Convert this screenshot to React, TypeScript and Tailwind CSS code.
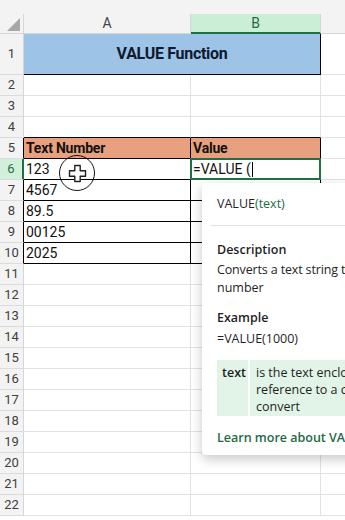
import React from "react";

const cellFont = { fontFamily: "Roboto, 'Liberation Sans', sans-serif" };
const tipFont = { fontFamily: "'Open Sans', 'Noto Sans', sans-serif" };

const tableA: Record<number, string> = { 6: "123", 7: "4567", 8: "89.5", 9: "00125", 10: "2025" };

function RowHeader({ n }: { n: number }) {
  const active = n === 6;
  const dark = n >= 5 && n <= 10 && !active;
  return (
    <div
      className={`w-[24px] shrink-0 flex items-center justify-center text-[13px] border-b border-b-[#dcdcdc] ${
        active
          ? "bg-[#d2efdb] text-[#1e7145] border-r-2 border-r-[#1e7145]"
          : dark
          ? "bg-[#f3f3f3] text-[#404040] border-r border-r-black"
          : "bg-[#f3f3f3] text-[#404040] border-r border-r-[#d6d6d6]"
      }`}
    >
      {n}
    </div>
  );
}

function Row({ n }: { n: number }) {
  if (n === 1) {
    return (
      <div className="flex h-[41px]">
        <RowHeader n={1} />
        <div className="w-[297px] shrink-0 bg-[#9dc3e6] border-r border-b border-black flex items-center justify-center">
          <span className="text-[16px] font-bold text-[#0e1a2e] tracking-[-0.3px]">VALUE Function</span>
        </div>
        <div className="flex-1 border-b border-[#e2e2e2]" />
      </div>
    );
  }
  if (n === 5) {
    return (
      <div className="flex h-[21px]">
        <RowHeader n={5} />
        <div className="w-[167px] shrink-0 bg-[#e9a07e] border-r border-b border-black flex items-center px-[2px]">
          <span className="text-[14px] font-bold text-[#111] tracking-[-0.2px]">Text Number</span>
        </div>
        <div className="w-[130px] shrink-0 bg-[#e9a07e] border-r border-b border-black flex items-center px-[2px]">
          <span className="text-[14px] font-bold text-[#111] tracking-[-0.2px]">Value</span>
        </div>
        <div className="flex-1 border-b border-[#e2e2e2]" />
      </div>
    );
  }
  const inTable = n >= 6 && n <= 10;
  const aboveTable = n === 4;
  return (
    <div className="flex h-[21px]">
      <RowHeader n={n} />
      <div
        className={`w-[167px] shrink-0 flex items-center px-[2px] border-r border-b ${
          inTable ? "border-black" : aboveTable ? "border-r-[#e2e2e2] border-b-black" : "border-[#e2e2e2]"
        }`}
      >
        {inTable && <span className="text-[14px] text-[#111]">{tableA[n]}</span>}
      </div>
      <div
        className={`relative w-[130px] shrink-0 flex items-center px-[2px] border-r border-b ${
          inTable ? "border-black" : aboveTable ? "border-r-[#e2e2e2] border-b-black" : "border-[#e2e2e2]"
        }`}
      >
        {n === 6 && (
          <>
            <span className="text-[14px] text-[#111]">=VALUE (</span>
            <span className="ml-[1px] w-[1px] h-[15px] bg-black" />
            <div className="absolute -left-[1px] -top-[1px] -right-[1px] -bottom-[1px] border-2 border-[#1e7145]" />
          </>
        )}
      </div>
      <div className="flex-1 border-b border-[#e2e2e2]" />
    </div>
  );
}

export default function App() {
  const rows = Array.from({ length: 22 }, (_, i) => i + 1);
  return (
    <div className="relative w-[345px] h-[520px] overflow-hidden bg-white" style={cellFont}>
      <div className="h-[14px] bg-[#f3f3f3]" />
      <div className="flex h-[20px] bg-[#f3f3f3] text-[14px]">
        <div className="w-[24px] shrink-0 relative border-r border-b border-[#d6d6d6]">
          <svg className="absolute left-[7px] top-[4px]" width="13" height="13" viewBox="0 0 13 13">
            <path d="M13 0 L13 13 L0 13 Z" fill="#a8a8a8" />
          </svg>
        </div>
        <div className="w-[167px] shrink-0 flex items-center justify-center text-[#444] border-r border-b border-[#d6d6d6]">A</div>
        <div className="w-[130px] shrink-0 flex items-center justify-center bg-[#caefd6] text-[#1e6b45] border-r border-r-[#d6d6d6] border-b-2 border-b-[#1e7145]">
          B
        </div>
        <div className="flex-1 border-b border-[#d6d6d6]" />
      </div>
      {rows.map((n) => (
        <Row key={n} n={n} />
      ))}

      {/* fill-handle cursor */}
      <div className="absolute left-[59px] top-[155px] w-[36px] h-[36px] rounded-full border-[1.5px] border-[#111] flex items-center justify-center">
        <svg width="19" height="19" viewBox="0 0 19 19">
          <path
            d="M6.8 1.5 H12.2 V6.8 H17.5 V12.2 H12.2 V17.5 H6.8 V12.2 H1.5 V6.8 H6.8 Z"
            fill="white"
            stroke="#222"
            strokeWidth="1.4"
            strokeLinejoin="round"
          />
        </svg>
      </div>

      {/* function tooltip */}
      <div
        className="absolute left-[202px] top-[183px] w-[180px] h-[272px] bg-white rounded-[4px] shadow-[0_4px_12px_rgba(0,0,0,0.22)] text-[12.5px] text-[#1f1f1f]"
        style={tipFont}
      >
        <div className="h-[42px] pl-[15px] flex items-center whitespace-nowrap">
          <span>VALUE</span>
          <span className="text-[#1e6b45]">(text)</span>
        </div>
        <div className="ml-[8px] h-px bg-[#e3e3e3]" />
        <div className="pl-[15px] pt-[15px] whitespace-nowrap leading-[18px]">
          <div className="font-semibold">Description</div>
          <div className="mt-[2px] tracking-[-0.15px]">Converts a text string that</div>
          <div>number</div>
          <div className="font-semibold mt-[12px]">Example</div>
          <div className="mt-[3px]">=VALUE(1000)</div>
        </div>
        <div className="ml-[15px] mt-[12px] h-[56px] flex bg-[#e2f4e7]">
          <div className="w-[33px] shrink-0 border-r-2 border-white pl-[5px] pt-[4px] font-semibold">text</div>
          <div className="pl-[6px] pt-[4px] leading-[17px] whitespace-nowrap">
            <div>is the text enclosed</div>
            <div>reference to a cell</div>
            <div>convert</div>
          </div>
        </div>
        <div className="pl-[15px] mt-[13px] whitespace-nowrap text-[#1e6b45] font-semibold">Learn more about VALUE</div>
      </div>
    </div>
  );
}
